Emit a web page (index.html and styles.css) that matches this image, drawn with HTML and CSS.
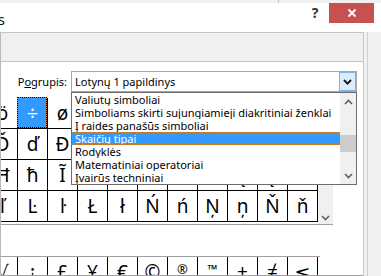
FILE: index.html
```html
<!DOCTYPE html>
<html>
<head>
<meta charset="utf-8">
<link rel="stylesheet" href="styles.css">
</head>
<body>
<div class="window">
  <div class="topband"><span class="tick"></span></div>
  <div class="titlebar">
    <div class="title-clip"><span class="title">Simbolis</span></div>
    <span class="help">?</span>
    <span class="close"><svg width="10" height="10" viewBox="0 0 10 10"><path d="M1.5 1.5 L8.5 8.5 M8.5 1.5 L1.5 8.5" stroke="#fff" stroke-width="1.8" fill="none"/></svg></span>
  </div>
  <div class="dialog">
    <div class="main">
      <div class="tabstrip"></div>
      <div class="panel">
        <div class="subset-row">
          <span class="label">P<u>o</u>grupis:</span>
          <div class="combo">
            <span class="combo-text">Lotynų 1 papildinys</span>
            <span class="combo-btn"><svg width="9" height="6" viewBox="0 0 9 6"><polyline points="1,1 4.5,4.6 8,1" stroke="#1a1a1a" stroke-width="2" fill="none"/></svg></span>
          </div>
        </div>
        <div class="grid-frame">
          <div class="grid">
            <span class="cell">ö</span><span class="cell sel">÷</span><span class="cell">ø</span><span class="cell">ù</span><span class="cell">ú</span><span class="cell">û</span><span class="cell">ü</span><span class="cell">ý</span><span class="cell">þ</span><span class="cell">ÿ</span><span class="cell">Ā</span>
            <span class="cell">Ď</span><span class="cell">ď</span><span class="cell">Đ</span><span class="cell">đ</span><span class="cell">Ē</span><span class="cell">ē</span><span class="cell">Ĕ</span><span class="cell">ĕ</span><span class="cell">Ė</span><span class="cell">ė</span><span class="cell">Ę</span>
            <span class="cell">Ħ</span><span class="cell">ħ</span><span class="cell">Ĩ</span><span class="cell">ĩ</span><span class="cell">Ī</span><span class="cell">ī</span><span class="cell">Ĭ</span><span class="cell">ĭ</span><span class="cell">Į</span><span class="cell">į</span><span class="cell">İ</span>
            <span class="cell">ľ</span><span class="cell">Ŀ</span><span class="cell">ŀ</span><span class="cell">Ł</span><span class="cell">ł</span><span class="cell">Ń</span><span class="cell">ń</span><span class="cell">Ņ</span><span class="cell">ņ</span><span class="cell">Ň</span><span class="cell">ň</span>
          </div>
          <div class="vscroll"><svg width="9" height="6" viewBox="0 0 9 6"><polyline points="1,1 4.5,4.5 8,1" stroke="#606060" stroke-width="1.6" fill="none"/></svg></div>
        </div>
        <div class="recent">
          <span class="cell">√</span><span class="cell">¡</span><span class="cell">£</span><span class="cell">¥</span><span class="cell">€</span><span class="cell">©</span><span class="cell small">®</span><span class="cell small tm">™</span><span class="cell">±</span><span class="cell">≠</span><span class="cell">≤</span>
        </div>
      </div>
    </div>
    <div class="gutter"><div class="gutter-line"></div></div>
  </div>
  <div class="droplist">
    <div class="items">
      <div class="item">Valiutų simboliai</div>
      <div class="item">Simboliams skirti sujungiamieji diakritiniai ženklai</div>
      <div class="item">Į raides panašūs simboliai</div>
      <div class="item active">Skaičių tipai</div>
      <div class="item">Rodyklės</div>
      <div class="item">Matematiniai operatoriai</div>
      <div class="item">Įvairūs techniniai</div>
    </div>
    <div class="lscroll">
      <div class="sbtn"><svg width="9" height="6" viewBox="0 0 9 6"><polyline points="1,5 4.5,1.5 8,5" stroke="#606060" stroke-width="1.6" fill="none"/></svg></div>
      <div class="track"><div class="thumb"></div></div>
      <div class="sbtn"><svg width="9" height="6" viewBox="0 0 9 6"><polyline points="1,1 4.5,4.5 8,1" stroke="#606060" stroke-width="1.6" fill="none"/></svg></div>
    </div>
  </div>
</div>
</body>
</html>
```

FILE: styles.css
```css
* { box-sizing: border-box; }
html, body { margin: 0; padding: 0; }
body {
  width: 381px;
  height: 276px;
  overflow: hidden;
  background: #fff;
  font-family: "Noto Sans", "DejaVu Sans", sans-serif;
  font-size: 11px;
  color: #000;
}
.window {
  position: relative;
  width: 381px;
  height: 276px;
  overflow: hidden;
  background: #fff;
}
.topband {
  height: 3px;
  background: #f0f0f0;
  display: flex;
}
.topband .tick {
  margin-left: 278px;
  width: 1px;
  background: #c8c8c8;
}
.titlebar {
  height: 29px;
  display: flex;
  align-items: flex-start;
  background: #fff;
}
.title-clip {
  width: 5px;
  height: 29px;
  overflow: hidden;
  display: flex;
  justify-content: flex-end;
  align-items: center;
}
.title {
  font-size: 15px;
  white-space: nowrap;
  color: #111;
  padding-top: 3px;
}
.help {
  margin-left: auto;
  margin-right: 6px;
  width: 16px;
  height: 20px;
  line-height: 20px;
  text-align: center;
  font-size: 14px;
  font-weight: bold;
  color: #333;
}
.close {
  width: 45px;
  height: 20px;
  margin-right: 7px;
  background: #c75050;
  display: flex;
  align-items: center;
  justify-content: center;
}
.close svg { display: block; }
.dialog {
  height: 244px;
  display: flex;
}
.main {
  width: 364px;
  height: 244px;
  border-left: 1px solid #b9b9b9;
  border-right: 1px solid #c8c8c8;
  display: flex;
  flex-direction: column;
}
.tabstrip {
  height: 30px;
  background: #f0f0f0;
  border-top: 1px solid #c4c4c4;
  border-bottom: 1px solid #c4c4c4;
}
.panel {
  height: 214px;
  background: #fff;
  padding-top: 9px;
  border-bottom: 1px solid #a0a0a0;
  overflow: hidden;
}
.gutter {
  flex: 1;
  background: #f0f0f0;
  padding-left: 3px;
  display: flex;
}
.gutter-line {
  width: 1px;
  background: #d0d0d0;
}
.subset-row {
  display: flex;
  align-items: center;
  height: 21px;
}
.label {
  width: 70px;
  padding-right: 4px;
  text-align: right;
  white-space: nowrap;
}
.combo {
  width: 286px;
  height: 21px;
  border: 1px solid #a6a6a6;
  display: flex;
  align-items: center;
  background: #fff;
}
.combo-text {
  padding-left: 3px;
  white-space: nowrap;
}
.combo-btn {
  margin-left: auto;
  width: 17px;
  height: 19px;
  background: #dcecfc;
  border: 1px solid #7eb4ea;
  display: flex;
  align-items: center;
  justify-content: center;
}
.combo-btn svg { display: block; }
.grid-frame {
  margin-top: 5px;
  width: 332px;
  height: 128px;
  padding-top: 1px;
  border-bottom: 1px solid #a0a0a0;
  display: flex;
  overflow: hidden;
}
.grid {
  margin-left: -13px;
  width: 330px;
  flex: none;
  display: grid;
  grid-template-columns: repeat(11, 30px);
  grid-auto-rows: 31px;
  align-content: start;
}
.cell {
  border-right: 1px solid #000;
  border-bottom: 1px solid #000;
  font-size: 19px;
  line-height: 30px;
  text-align: center;
  color: #000;
}
.cell.sel {
  position: relative;
  background: #3399ff;
  color: #fff;
  font-size: 20px;
}
.cell.sel::before,
.cell.sel::after {
  content: "";
  position: absolute;
  top: -1px;
  left: -1px;
  right: 0;
  bottom: 0;
}
.cell.sel::before { border: 1px solid #d07a1a; }
.cell.sel::after { border: 1px dotted #000; }
.vscroll {
  width: 15px;
  flex: none;
  margin-top: -1px;
  background: #f0f0f0;
  display: flex;
  flex-direction: column;
  justify-content: flex-end;
  align-items: center;
  padding-bottom: 3px;
}
.vscroll svg { display: block; }
.recent {
  margin-top: 31px;
  margin-left: -13px;
  width: 332px;
  border-top: 1px solid #a0a0a0;
  display: grid;
  grid-template-columns: repeat(11, 30px);
  grid-auto-rows: 31px;
}
.recent .cell { border-bottom: none; }
.recent .cell.small {
  font-size: 13px;
  line-height: 24px;
}
.recent .cell.tm { font-weight: bold; }
.droplist {
  position: absolute;
  left: 71px;
  top: 92px;
  width: 286px;
  height: 93px;
  border: 1px solid #6d6d6d;
  background: #fff;
  display: flex;
}
.items {
  width: 268px;
}
.item {
  height: 13px;
  line-height: 13px;
  padding-left: 3px;
  white-space: nowrap;
  overflow: hidden;
}
.item.active {
  position: relative;
  background: #3399ff;
  color: #fff;
}
.item.active::before,
.item.active::after {
  content: "";
  position: absolute;
  inset: 0;
}
.item.active::before { border: 1px solid #d07a1a; }
.item.active::after { border: 1px dotted #3399ff; }
.lscroll {
  width: 16px;
  background: #f0f0f0;
  display: flex;
  flex-direction: column;
}
.sbtn {
  height: 17px;
  display: flex;
  align-items: center;
  justify-content: center;
}
.sbtn svg { display: block; }
.track {
  flex: 1;
  padding-top: 25px;
}
.thumb {
  height: 17px;
  background: #cdcdcd;
}
```
